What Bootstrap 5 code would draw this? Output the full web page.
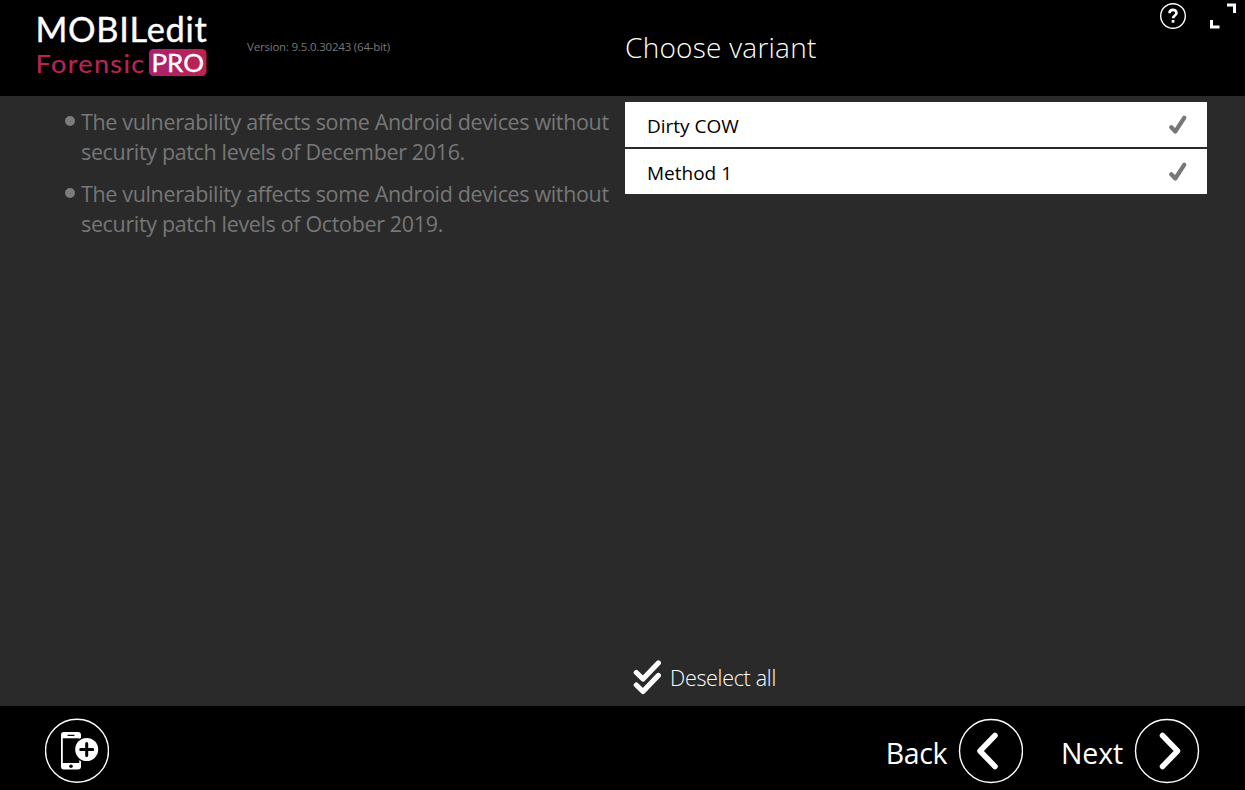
<!DOCTYPE html>
<html lang="en">
<head>
<meta charset="utf-8">
<meta name="viewport" content="width=device-width, initial-scale=1">
<title>MOBILedit Forensic PRO</title>
<link href="https://cdn.jsdelivr.net/npm/bootstrap@5.3.0/dist/css/bootstrap.min.css" rel="stylesheet">
<style>
  body { font-family: "Open Sans", "Noto Sans", sans-serif; background: #2a2a2a; color: #fff; }
  .app-top { height: 96px; background: #000; }
  .app-left { width: 625px; }
  .app-version { font-size: 11.5px; line-height: 16px; color: #777; margin: 39px 0 0 38px; letter-spacing: -.2px; }
  .app-title { font-size: 28px; font-weight: 300; line-height: 38px; margin-top: 28px; letter-spacing: .25px; }
  .notes { padding: 11px 0 0 65px; color: #777; font-size: 21.5px; line-height: 30px; letter-spacing: -.35px; }
  .notes li { margin-bottom: 12px; white-space: nowrap; }
  .dot { flex: none; width: 10px; height: 10px; margin: 9px 6px 0 0; background: #7c7c7c; }
  .variants { width: 582px; margin-top: 6px; gap: 2px; }
  .variant { height: 45px; padding: 2px 19px 0 22px; border: 0; border-radius: 0 !important; font-size: 19px; line-height: 26px; color: #000; }
  .deselect { font-size: 21.5px; font-weight: 300; letter-spacing: -.3px; height: 36px; margin: 0 0 10px 8px; }
  .app-bottom { height: 84px; background: #000; padding: 0 45px; }
  .nav-btn { font-size: 28.5px; line-height: 40px; color: #fff; letter-spacing: -.4px; }
  .nav-btn span { padding-top: 27px; }
  .nav-next { margin-left: 38px; letter-spacing: -.15px; }
  svg { display: block; flex: none; }
  .t { white-space: nowrap; }
  .logo-text { font-family: Lato, sans-serif; stroke-linejoin: round; }
</style>
</head>
<body class="vh-100 d-flex flex-column overflow-hidden">
<header class="app-top d-flex flex-shrink-0">
  <div class="app-left d-flex">
    <svg class="logo-text" width="209" height="96" viewBox="0 0 209 96">
      <defs><linearGradient id="pro"><stop offset="0" stop-color="#aa206f"/><stop offset="1" stop-color="#bd2350"/></linearGradient></defs>
      <text x="35.500" y="42" font-size="34" letter-spacing=".7" textLength="172" lengthAdjust="spacingAndGlyphs" fill="#fff" stroke="#fff" stroke-width=".4">MOBILedit</text>
      <text x="35.500" y="72.500" font-size="25" letter-spacing="1.200" textLength="110" lengthAdjust="spacingAndGlyphs" fill="#b92456" stroke="#b92456" stroke-width=".2">Forensic</text>
      <rect x="149" y="49" width="57.500" height="27" rx="4.500" fill="url(#pro)"/>
      <text x="151.500" y="72" font-size="25.500" textLength="52.500" lengthAdjust="spacingAndGlyphs" fill="#fff" stroke="#fff" stroke-width=".4">PRO</text>
    </svg>
    <div class="app-version"><span class="t">Version: 9.5.0.30243 (64-bit)</span></div>
  </div>
  <h1 class="app-title mb-0"><span class="t">Choose variant</span></h1>
  <div class="d-flex ms-auto">
    <svg width="28" height="30" viewBox="0 0 28 30"><circle cx="14" cy="16" r="12.300" fill="none" stroke="#fff" stroke-width="1.400"/><path d="M10.500 13.200c0-4.400 7-4.300 7-.3 0 2.600-3.400 2.500-3.400 5.300" fill="none" stroke="#fff" stroke-width="2.600"/><rect x="12.700" y="20" width="2.700" height="2.700" fill="#fff"/></svg>
    <svg width="58" height="30" viewBox="0 0 58 30" fill="none" stroke="#fff" stroke-width="3"><path d="M40 5h7.500v8M24.500 20v7h8"/></svg>
  </div>
</header>
<main class="d-flex flex-grow-1">
  <section class="app-left flex-shrink-0">
    <ul class="notes list-unstyled mb-0">
      <li class="d-flex"><span class="dot rounded-circle"></span><div>The vulnerability affects some Android devices without<br>security patch levels of December 2016.</div></li>
      <li class="d-flex"><span class="dot rounded-circle"></span><div>The vulnerability affects some Android devices without<br>security patch levels of October 2019.</div></li>
    </ul>
  </section>
  <section class="d-flex flex-column">
    <div class="variants list-group rounded-0">
      <button class="variant list-group-item d-flex align-items-center justify-content-between text-start"><span class="t">Dirty COW</span><svg width="20" height="22" viewBox="0 0 20 22"><path d="M3.300 12.200l4 4.300L16.200 2.800" fill="none" stroke="#777" stroke-width="4.200" stroke-linecap="round" stroke-linejoin="round"/></svg></button>
      <button class="variant list-group-item d-flex align-items-center justify-content-between text-start"><span class="t">Method 1</span><svg width="20" height="22" viewBox="0 0 20 22"><path d="M3.300 12.200l4 4.300L16.200 2.800" fill="none" stroke="#777" stroke-width="4.200" stroke-linecap="round" stroke-linejoin="round"/></svg></button>
    </div>
    <div class="deselect d-flex align-items-center mt-auto">
      <svg width="37" height="36" viewBox="0 0 37 36" fill="none" stroke="#fff" stroke-width="5.200" stroke-linecap="round" stroke-linejoin="round"><path d="M3.300 12.500l6.700 6.500L25.300 3M3.300 25l6.700 6.500L25.300 15.500"/></svg>
      <span class="t">Deselect all</span>
    </div>
  </section>
</main>
<footer class="app-bottom d-flex flex-shrink-0 align-items-start">
  <svg class="mt-2" width="64" height="74" viewBox="0 0 64 74"><circle cx="32" cy="36.800" r="31.500" fill="none" stroke="#fff" stroke-width="1.400"/><rect x="16" y="18" width="20" height="37.500" rx="3" fill="#fff"/><rect x="17.800" y="24.300" width="16.400" height="24.700"/><path d="M23 21.300h6" stroke="#000" stroke-width="1.200" stroke-linecap="round"/><circle cx="26" cy="52.200" r="1.800"/><circle cx="41.700" cy="35.500" r="13"/><circle cx="41.700" cy="35.500" r="11.500" fill="#fff"/><path d="M41.700 29.500v12M35.700 35.500h12" stroke="#000" stroke-width="3" stroke-linecap="round"/></svg>
  <div class="nav-btn d-flex ms-auto"><span class="t">Back</span><svg class="ms-2" width="68" height="84" viewBox="0 0 68 84" fill="none" stroke="#fff"><circle cx="36" cy="45" r="31.500" stroke-width="1.400"/><path d="M40 29.500L25 45l15 15.500" stroke-width="5.500" stroke-linecap="round" stroke-linejoin="round"/></svg></div>
  <div class="nav-btn nav-next d-flex"><span class="t">Next</span><svg class="ms-2" width="69" height="84" viewBox="0 0 69 84" fill="none" stroke="#fff"><circle cx="36" cy="45" r="31.500" stroke-width="1.400"/><path d="M31.500 29.500L46.500 45L31.500 60.500" stroke-width="5.500" stroke-linecap="round" stroke-linejoin="round"/></svg></div>
</footer>
<script src="https://cdn.jsdelivr.net/npm/bootstrap@5.3.0/dist/js/bootstrap.bundle.min.js"></script>
</body>
</html>
